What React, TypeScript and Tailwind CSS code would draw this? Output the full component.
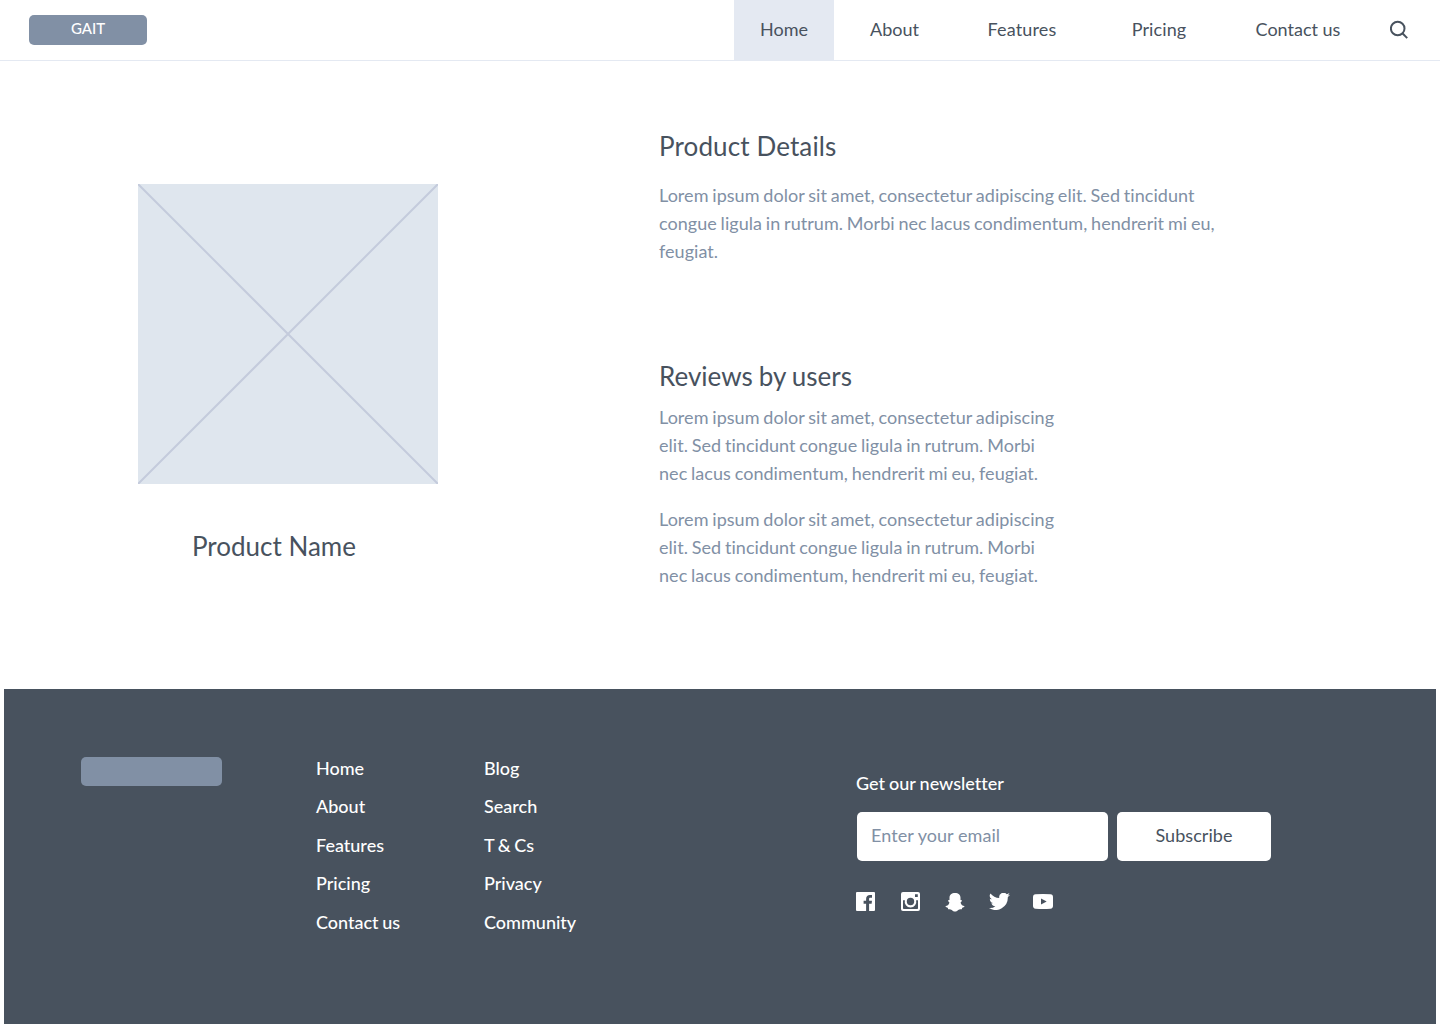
import React from "react";

const navItems = [
  { label: "Home", cls: "w-[100px] bg-[#e4e9f2]" },
  { label: "About", cls: "w-[121px]" },
  { label: "Features", cls: "w-[134px] tracking-[0.15px]" },
  { label: "Pricing", cls: "w-[140px] tracking-[0.1px]" },
  { label: "Contact us", cls: "w-[138px]" },
];

const reviewLines = [
  "Lorem ipsum dolor sit amet, consectetur adipiscing",
  "elit. Sed tincidunt congue ligula in rutrum. Morbi",
  "nec lacus condimentum, hendrerit mi eu, feugiat.",
];

const detailLines = [
  "Lorem ipsum dolor sit amet, consectetur adipiscing elit. Sed tincidunt",
  "congue ligula in rutrum. Morbi nec lacus condimentum, hendrerit mi eu,",
  "feugiat.",
];

function Lines({ lines }: { lines: string[] }) {
  return (
    <p className="whitespace-nowrap text-[18px] leading-7 tracking-[0.04px] text-[#8190a5] [word-spacing:-0.85px]">
      {lines.map((line) => (
        <span key={line} className="block">
          {line}
        </span>
      ))}
    </p>
  );
}

function Header() {
  return (
    <header className="flex h-[61px] justify-between border-b border-[#e4e9f2] pl-[29px] pr-[32px]">
      <div className="mt-[15px] flex h-[30px] w-[118px] justify-center rounded-[5px] bg-[#8190a5] text-[15px] font-medium leading-[27px] text-white">
        GAIT
      </div>
      <div className="flex">
        <nav className="flex">
          {navItems.map((item) => (
            <a key={item.label} className={`flex items-center justify-center whitespace-nowrap pb-px text-[18px] ${item.cls}`}>
              {item.label}
            </a>
          ))}
        </nav>
        <svg className="ml-[23px] mt-5 h-5 w-[18px]" viewBox="0 0 18 20" fill="none" stroke="#48525e" strokeWidth="2">
          <circle cx="7.7" cy="8.5" r="6.8" />
          <path d="M12.4 13.3l4.8 4.8" />
        </svg>
      </div>
    </header>
  );
}

function SocialIcons() {
  return (
    <div className="mt-[30px] flex items-start text-white">
      <svg className="mt-px mr-[26px] h-[19px] w-[19px]" viewBox="0 0 19 19" fill="currentColor">
        <path d="M1 0H18Q19 0 19 1V18Q19 19 18 19H13.1V11.7H15.6L16 8.8H13.1V7.1C13.1 6.2 13.4 5.7 14.6 5.7H16V3.1C15.6 3 14.9 3 14 3C11.6 3 10.1 4.4 10.1 6.9V8.8H7.6V11.7H10.1V19H1Q0 19 0 18V1Q0 0 1 0Z" />
      </svg>
      <svg className="mt-px mr-[25px] h-[19px] w-[19px]" viewBox="0 0 19 19" fill="currentColor" fillRule="evenodd">
        <path d="M2 0H17Q19 0 19 2V17Q19 19 17 19H2Q0 19 0 17V2Q0 0 2 0ZM14 2.2V5H16.8V2.2ZM2 8.2V16.2Q2 17 2.8 17H16.2Q17 17 17 16.2V8.2H15.1A5.8 5.8 0 1 1 3.9 8.2ZM9.5 5.8A3.7 3.7 0 1 0 9.5 13.2A3.7 3.7 0 1 0 9.5 5.8Z" />
      </svg>
      <svg className="mt-[2px] mr-[24px] h-[19px] w-[20px]" viewBox="0 0 20 19" fill="currentColor">
        <path d="M10 0C13.4 0 15.5 2 15.5 4.8V7.1C16.1 7.3 16.7 6.9 17 7.5C17.3 8.3 15.9 8.8 15.6 9.4C15.8 11.4 17.4 12.6 19.4 13.1C20 14 18.3 14.6 17.2 14.8L16.8 16.3C15.3 16 14.2 16.2 13.2 16.9C12 17.9 11.2 18.5 10 18.5S8 17.9 6.8 16.9C5.8 16.2 4.7 16 3.2 16.3L2.8 14.8C1.7 14.6 0 14 .6 13.1C2.6 12.6 4.2 11.4 4.4 9.4C4.1 8.8 2.7 8.3 3 7.5C3.3 6.9 3.9 7.3 4.5 7.1V4.8C4.5 2 6.6 0 10 0Z" />
      </svg>
      <svg className="mt-[2px] mr-[23px] h-[17px] w-[21px]" viewBox="1 2.9 22 17.7" preserveAspectRatio="none" fill="currentColor">
        <path d="M23 4.8a9 9 0 0 1-2.6.7 4.5 4.5 0 0 0 2-2.5 9 9 0 0 1-2.9 1.1 4.5 4.5 0 0 0-7.7 4.1A12.8 12.8 0 0 1 2.5 3.5a4.5 4.5 0 0 0 1.4 6 4.5 4.5 0 0 1-2-.6 4.5 4.5 0 0 0 3.6 4.5 4.5 4.5 0 0 1-2 .1 4.5 4.5 0 0 0 4.2 3.1A9 9 0 0 1 1 18.5 12.8 12.8 0 0 0 20.7 7.1 9 9 0 0 0 23 4.8Z" />
      </svg>
      <svg className="mt-[3px] h-[15px] w-[20px]" viewBox="0 0 20 15" fill="currentColor" fillRule="evenodd">
        <path d="M2.5.3Q10-.3 17.5.3Q20 .5 20 3.2V11.8Q20 14.5 17.5 14.7Q10 15.3 2.5 14.7Q0 14.5 0 11.8V3.2Q0 .5 2.5.3ZM8 4.5V10.5L13.7 7.5Z" />
      </svg>
    </div>
  );
}

function LinkColumn({ items, width }: { items: string[]; width: string }) {
  return (
    <ul className={`grid grid-rows-[38px_39px_38px_39px_28px] text-[18px] font-medium leading-7 text-white [word-spacing:-0.9px] ${width}`}>
      {items.map((item) => (
        <li key={item}>{item}</li>
      ))}
    </ul>
  );
}

function Footer() {
  return (
    <footer className="mx-1 flex h-[335px] bg-[#48525e] pl-[77px]">
      <div className="mt-[68px] h-[29px] w-[141px] rounded-[5px] bg-[#8190a5]" />
      <div className="ml-[94px] mt-[65px] flex items-start">
        <LinkColumn items={["Home", "About", "Features", "Pricing", "Contact us"]} width="w-[168px]" />
        <LinkColumn items={["Blog", "Search", "T & Cs", "Privacy", "Community"]} width="w-[372px]" />
      </div>
      <div className="mt-[80px]">
        <h3 className="text-[18px] font-medium leading-7 text-white [word-spacing:-0.5px]">Get our newsletter</h3>
        <form className="ml-px mt-[15px] flex gap-[9px]">
          <div className="flex h-[49px] w-[251px] items-center rounded-[5px] bg-white pb-[3px] pl-[14px] text-[18px] tracking-[0.06px] text-[#8190a5]">
            Enter your email
          </div>
          <button type="button" className="h-[49px] w-[154px] rounded-[5px] bg-white pb-[3px] text-[18px] tracking-[0.06px]">
            Subscribe
          </button>
        </form>
        <SocialIcons />
      </div>
    </footer>
  );
}

export default function App() {
  return (
    <div className="h-[1024px] w-[1440px] overflow-hidden bg-white font-['Lato',sans-serif] text-[#48525e] [font-variant-ligatures:none]">
      <Header />
      <main className="flex h-[628px]">
        <section className="ml-[138px] mt-[123px] w-[521px]">
          <svg className="block h-[300px] w-[300px] bg-[#dfe6ee]" viewBox="0 0 300 300" stroke="#c4cbdc" strokeWidth="2">
            <path d="M0 0L300 300M300 0L0 300" />
          </svg>
          <h1 className="ml-[54px] mt-[42px] text-[26px] leading-10">Product Name</h1>
        </section>
        <section className="mt-[65px]">
          <h2 className="text-[26px] leading-10 tracking-[0.12px]">Product Details</h2>
          <div className="mt-[15px]">
            <Lines lines={detailLines} />
          </div>
          <h2 className="mt-[91px] text-[26px] leading-10 [word-spacing:-0.6px]">Reviews by users</h2>
          <div className="mt-[7px] flex flex-col gap-[18px]">
            <Lines lines={reviewLines} />
            <Lines lines={reviewLines} />
          </div>
        </section>
      </main>
      <Footer />
    </div>
  );
}
